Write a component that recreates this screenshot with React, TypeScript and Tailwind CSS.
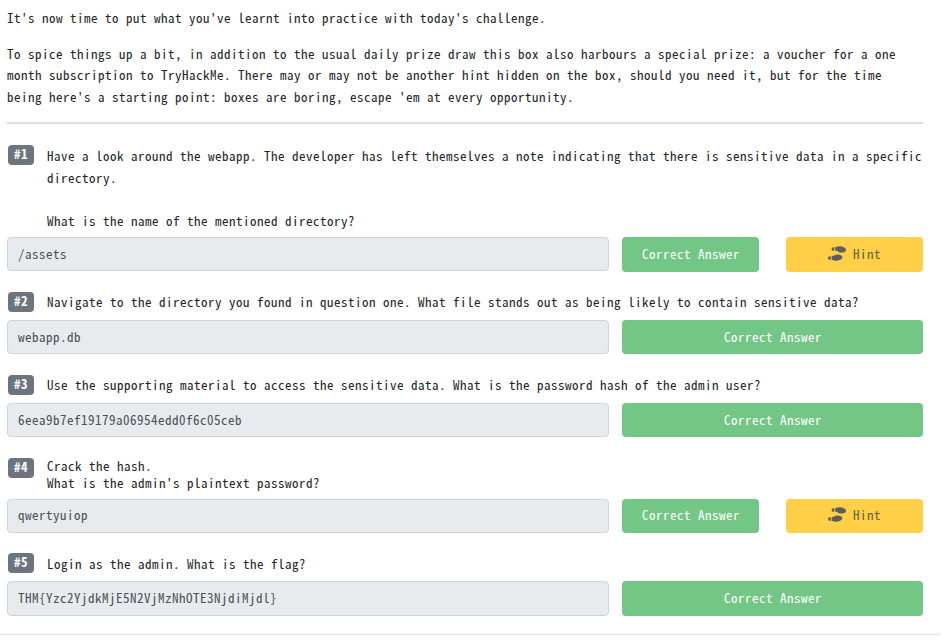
import { FaShoePrints } from "react-icons/fa";

type Task = {
  id: number;
  lines: string[];
  answer: string;
  hint?: boolean;
  header: string;
  text: string;
  row: string;
  input: string;
  button: string;
};

const tasks: Task[] = [
  {
    id: 1,
    lines: [
      "Have a look around the webapp. The developer has left themselves a note indicating that there is sensitive data in a specific",
      "directory.",
      "\u00a0",
      "What is the name of the mentioned directory?",
    ],
    answer: "/assets",
    hint: true,
    header: "h-[92px]",
    text: "pt-[0.4px] leading-[21.6px]",
    row: "h-[34px] mb-[21px]",
    input: "pb-px",
    button: "h-[35px] pb-[2px]",
  },
  {
    id: 2,
    lines: ["Navigate to the directory you found in question one. What file stands out as being likely to contain sensitive data?"],
    answer: "webapp.db",
    header: "h-[28px]",
    text: "leading-[19px]",
    row: "h-[34px] mb-[21px]",
    input: "pb-px",
    button: "h-[34px]",
  },
  {
    id: 3,
    lines: ["Use the supporting material to access the sensitive data. What is the password hash of the admin user?"],
    answer: "6eea9b7ef19179a06954edd0f6c05ceb",
    header: "h-[28px]",
    text: "leading-[19px]",
    row: "h-[34px] mb-[21px]",
    input: "pb-px",
    button: "h-[34px]",
  },
  {
    id: 4,
    lines: ["Crack the hash.", "What is the admin's plaintext password?"],
    answer: "qwertyuiop",
    hint: true,
    header: "h-[41px]",
    text: "-mt-px leading-[17px]",
    row: "h-[34px] mb-[20px]",
    input: "pb-[3px]",
    button: "h-[34px] pb-[2px]",
  },
  {
    id: 5,
    lines: ["Login as the admin. What is the flag?"],
    answer: "THM{Yzc2YjdkMjE5N2VjMzNhOTE3NjdiMjdl}",
    header: "h-[28px]",
    text: "leading-[21px]",
    row: "h-[35px] mb-[18px]",
    input: "pb-px",
    button: "h-[35px] pb-[2px]",
  },
];

function Question({ task }: { task: Task }) {
  return (
    <section>
      <div className={`flex items-start ${task.header}`}>
        <span className="ml-px mr-[13px] h-5 w-[26px] shrink-0 rounded bg-[#6c757d] text-center font-bold leading-[17px] text-white">
          #{task.id}
        </span>
        <div className={task.text}>
          {task.lines.map((line, i) => (
            <div key={i}>{line}</div>
          ))}
        </div>
      </div>
      <div className={`flex ${task.row}`}>
        <input
          readOnly
          value={task.answer}
          className={`mr-[13px] h-full w-[602px] rounded-[4px] border border-[#ced4da] bg-[#e8ebed] px-[10px] tracking-[0.5px] text-[#495057] outline-none ${task.input}`}
        />
        <button
          className={`rounded-[4px] bg-[#74c686] pl-px tracking-[0.5px] text-white ${task.button} ${task.hint ? "w-[137px]" : "w-[301px]"}`}
        >
          Correct Answer
        </button>
        {task.hint && (
          <button
            className={`ml-[27px] flex w-[137px] items-center justify-center gap-[7px] rounded-[4px] bg-[#ffcf48] tracking-[0.5px] text-[#65603d] ${task.button}`}
          >
            <FaShoePrints className="h-[15px] w-[18px] text-[#5b5d60]" />
            Hint
          </button>
        )}
      </div>
    </section>
  );
}

export default function App() {
  return (
    <div className="h-[640px] w-[941px] overflow-hidden bg-white">
      <main className="h-[635px] w-[941px] whitespace-nowrap rounded-br-[4px] border-b border-[#dfdfdf] pl-[7px] pr-[18px] pt-[7px] font-['Noto_Sans_CJK_SC','DejaVu_Sans_Mono',monospace] text-[13px] leading-[21.6px] tracking-[0.5px] text-[#212529] [font-feature-settings:'hwid'_1,'liga'_0] [font-variant-ligatures:none]">
        <p className="mb-[14.2px]">It's now time to put what you've learnt into practice with today's challenge.</p>
        <p>
          To spice things up a bit, in addition to the usual daily prize draw this box also harbours a special prize: a voucher for a one
          <br />
          month subscription to TryHackMe. There may or may not be another hint hidden on the box, should you need it, but for the time
          <br />
          being here's a starting point: boxes are boring, escape 'em at every opportunity.
        </p>
        <hr className="mb-[21px] mt-[14.4px] h-[2px] border-0 bg-[#dedede]" />
        {tasks.map((task) => (
          <Question key={task.id} task={task} />
        ))}
      </main>
    </div>
  );
}
